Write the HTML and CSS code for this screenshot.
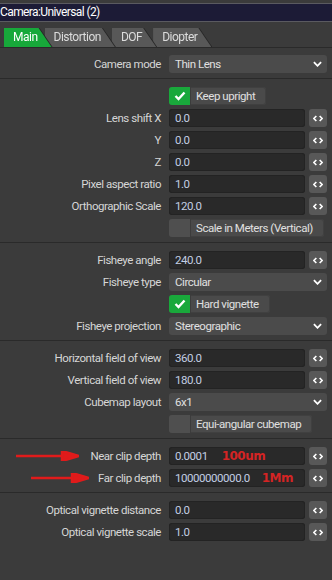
FILE: index.html
```html
<!DOCTYPE html>
<html lang="en">
<head>
    <meta charset="UTF-8">
    <title>Camera:Universal (2)</title>
    <link rel="stylesheet" href="styles.css">
</head>
<body>

<div class="titlebar">Camera:Universal (2)</div>

<nav class="tabs">
    <span class="tab active"><span class="face">Main</span></span>
    <span class="tab"><span class="face">Distortion</span></span>
    <span class="tab"><span class="face">DOF</span></span>
    <span class="tab"><span class="face">Diopter</span></span>
</nav>

<div class="panel">
    <!-- Camera mode -->
    <div class="section first">
        <div class="row">
            <label>Camera mode</label>
            <div class="select"><span>Thin Lens</span><svg class="chev" viewBox="0 0 10 6"><path d="M1 1 L5 5 L9 1"/></svg></div>
        </div>
    </div>

    <!-- Lens -->
    <div class="section">
        <div class="row">
            <label></label>
            <div class="toggle on"><span class="box"><svg viewBox="0 0 12 10"><path d="M1.5 5 L4.5 8 L10.5 1.5"/></svg></span><span class="text">Keep upright</span></div>
        </div>
        <div class="row">
            <label>Lens shift X</label>
            <div class="ctrl"><div class="field">0.0</div><span class="spin"><svg viewBox="0 0 12 8"><path d="M4 1 L1 4 L4 7 M8 1 L11 4 L8 7"/></svg></span></div>
        </div>
        <div class="row">
            <label>Y</label>
            <div class="ctrl"><div class="field">0.0</div><span class="spin"><svg viewBox="0 0 12 8"><path d="M4 1 L1 4 L4 7 M8 1 L11 4 L8 7"/></svg></span></div>
        </div>
        <div class="row">
            <label>Z</label>
            <div class="ctrl"><div class="field">0.0</div><span class="spin"><svg viewBox="0 0 12 8"><path d="M4 1 L1 4 L4 7 M8 1 L11 4 L8 7"/></svg></span></div>
        </div>
        <div class="row">
            <label>Pixel aspect ratio</label>
            <div class="ctrl"><div class="field">1.0</div><span class="spin"><svg viewBox="0 0 12 8"><path d="M4 1 L1 4 L4 7 M8 1 L11 4 L8 7"/></svg></span></div>
        </div>
        <div class="row">
            <label>Orthographic Scale</label>
            <div class="ctrl"><div class="field">120.0</div><span class="spin"><svg viewBox="0 0 12 8"><path d="M4 1 L1 4 L4 7 M8 1 L11 4 L8 7"/></svg></span></div>
        </div>
        <div class="row">
            <label></label>
            <div class="toggle"><span class="box"></span><span class="text">Scale in Meters (Vertical)</span></div>
        </div>
    </div>

    <!-- Fisheye -->
    <div class="section">
        <div class="row">
            <label>Fisheye angle</label>
            <div class="ctrl"><div class="field">240.0</div><span class="spin"><svg viewBox="0 0 12 8"><path d="M4 1 L1 4 L4 7 M8 1 L11 4 L8 7"/></svg></span></div>
        </div>
        <div class="row">
            <label>Fisheye type</label>
            <div class="select"><span>Circular</span><svg class="chev" viewBox="0 0 10 6"><path d="M1 1 L5 5 L9 1"/></svg></div>
        </div>
        <div class="row">
            <label></label>
            <div class="toggle on"><span class="box"><svg viewBox="0 0 12 10"><path d="M1.5 5 L4.5 8 L10.5 1.5"/></svg></span><span class="text">Hard vignette</span></div>
        </div>
        <div class="row">
            <label>Fisheye projection</label>
            <div class="select"><span>Stereographic</span><svg class="chev" viewBox="0 0 10 6"><path d="M1 1 L5 5 L9 1"/></svg></div>
        </div>
    </div>

    <!-- Cubemap -->
    <div class="section">
        <div class="row">
            <label>Horizontal field of view</label>
            <div class="ctrl"><div class="field">360.0</div><span class="spin"><svg viewBox="0 0 12 8"><path d="M4 1 L1 4 L4 7 M8 1 L11 4 L8 7"/></svg></span></div>
        </div>
        <div class="row">
            <label>Vertical field of view</label>
            <div class="ctrl"><div class="field">180.0</div><span class="spin"><svg viewBox="0 0 12 8"><path d="M4 1 L1 4 L4 7 M8 1 L11 4 L8 7"/></svg></span></div>
        </div>
        <div class="row">
            <label>Cubemap layout</label>
            <div class="select"><span>6x1</span><svg class="chev" viewBox="0 0 10 6"><path d="M1 1 L5 5 L9 1"/></svg></div>
        </div>
        <div class="row">
            <label></label>
            <div class="toggle"><span class="box"></span><span class="text">Equi-angular cubemap</span></div>
        </div>
    </div>

    <!-- Clipping -->
    <div class="section">
        <div class="row">
            <label><svg class="arrow near" viewBox="0 0 63 10"><path d="M0 5 H50"/><polygon points="46,0 63,5 46,10"/></svg>Near clip depth</label>
            <div class="ctrl"><div class="field">0.0001<span class="note near">100um</span></div><span class="spin"><svg viewBox="0 0 12 8"><path d="M4 1 L1 4 L4 7 M8 1 L11 4 L8 7"/></svg></span></div>
        </div>
        <div class="row">
            <label><svg class="arrow far" viewBox="0 0 58 10"><path d="M0 5 H45"/><polygon points="41,0 58,5 41,10"/></svg>Far clip depth</label>
            <div class="ctrl"><div class="field">10000000000.0<span class="note far">1Mm</span></div><span class="spin"><svg viewBox="0 0 12 8"><path d="M4 1 L1 4 L4 7 M8 1 L11 4 L8 7"/></svg></span></div>
        </div>
    </div>

    <!-- Optical vignette -->
    <div class="section last">
        <div class="row">
            <label>Optical vignette distance</label>
            <div class="ctrl"><div class="field">0.0</div><span class="spin"><svg viewBox="0 0 12 8"><path d="M4 1 L1 4 L4 7 M8 1 L11 4 L8 7"/></svg></span></div>
        </div>
        <div class="row">
            <label>Optical vignette scale</label>
            <div class="ctrl"><div class="field">1.0</div><span class="spin"><svg viewBox="0 0 12 8"><path d="M4 1 L1 4 L4 7 M8 1 L11 4 L8 7"/></svg></span></div>
        </div>
    </div>
</div>

</body>
</html>
```

FILE: styles.css
```css
body {
    margin: 0;
    width: 332px;
    min-height: 580px;
    background-color: #3b3b3b;
    font-family: Roboto, "Liberation Sans", sans-serif;
    font-size: 11.5px;
    letter-spacing: -0.45px;
    color: #d4d4d4;
    overflow: hidden;
}

.titlebar {
    margin-top: 3px;
    height: 17px;
    line-height: 17px;
    background-color: #1c1b36;
    border-top: 1px solid #5a5a60;
    border-bottom: 1px solid #5a5a60;
    color: #fff;
    font-size: 12px;
    letter-spacing: -0.6px;
    white-space: nowrap;
}

.tabs {
    display: flex;
    padding: 6px 0 0 4px;
    border-bottom: 1px solid #2a2a2a;
}

.tab {
    position: relative;
    margin-right: -3px;
    filter: drop-shadow(1px 0 0 #262626);
}

.tab:nth-child(1) { z-index: 4; margin-right: -7px; }
.tab:nth-child(2) { z-index: 3; }
.tab:nth-child(3) { z-index: 2; }
.tab:nth-child(4) { z-index: 1; }

.tab .face {
    display: block;
    height: 19px;
    line-height: 19px;
    padding: 0 14px 0 9px;
    background-color: #585858;
    color: #dcdcdc;
    font-size: 12px;
    letter-spacing: -0.5px;
    clip-path: polygon(0 0, calc(100% - 13px) 0, 100% 100%, 0 100%);
}

.tab.active .face {
    background-color: #17a83a;
    color: #fff;
}

.section {
    display: flex;
    flex-direction: column;
    gap: 4px;
    padding: 8px 0 5px;
    border-top: 1px solid #2a2a2a;
}

.section.first {
    border-top: none;
    padding-top: 7px;
}

.row {
    display: grid;
    grid-template-columns: 161px 1fr;
    column-gap: 8px;
    padding-right: 5px;
    height: 18px;
    align-items: center;
}

.row label {
    display: flex;
    justify-content: flex-end;
    align-items: center;
    white-space: nowrap;
    color: #d6d6d6;
}

.ctrl {
    display: flex;
    gap: 4px;
    height: 18px;
}

.field {
    flex: 1;
    height: 18px;
    line-height: 18px;
    padding-left: 6px;
    background-color: #292929;
    border-radius: 3px;
    box-shadow: inset 0 0 0 1px #232323;
    color: #c3cee3;
    white-space: nowrap;
}

.spin {
    width: 18px;
    height: 18px;
    border-radius: 3px;
    background-color: #585858;
    display: flex;
    align-items: center;
    justify-content: center;
}

.spin svg {
    width: 10px;
    height: 7px;
    fill: none;
    stroke: #fff;
    stroke-width: 2;
}

.select {
    height: 18px;
    padding: 0 5px 0 6px;
    background-color: #4b4b4b;
    border-radius: 3px;
    display: flex;
    align-items: center;
    justify-content: space-between;
    color: #e0e0e0;
}

.chev {
    width: 9px;
    height: 6px;
    fill: none;
    stroke: #fff;
    stroke-width: 2;
}

.toggle {
    justify-self: start;
    display: inline-flex;
    height: 18px;
    background-color: #4a4a4a;
    border-radius: 3px;
    overflow: hidden;
    box-shadow: inset 0 0 0 1px #404040;
}

.toggle .box {
    width: 21px;
    border-right: 1px solid #3c3c3c;
    background-color: #4f4f4f;
    display: flex;
    align-items: center;
    justify-content: center;
}

.toggle.on .box {
    background-color: #19a83b;
}

.toggle .box svg {
    width: 12px;
    height: 10px;
    fill: none;
    stroke: #fff;
    stroke-width: 2.4;
}

.toggle .text {
    padding: 0 11px 0 5px;
    line-height: 18px;
    color: #e0e0e0;
    white-space: nowrap;
}

.note {
    font-family: "DejaVu Sans", sans-serif;
    font-weight: bold;
    font-size: 12px;
    letter-spacing: -0.5px;
    color: #d42424;
}

.note.near { margin-left: 14px; }
.note.far { margin-left: 12px; }

.arrow {
    height: 10px;
    fill: #e01b1b;
    stroke: #e01b1b;
    stroke-width: 2.5;
}

.arrow.near { width: 63px; margin-right: 11px; }
.arrow.far { width: 58px; margin-right: 9px; }
```
